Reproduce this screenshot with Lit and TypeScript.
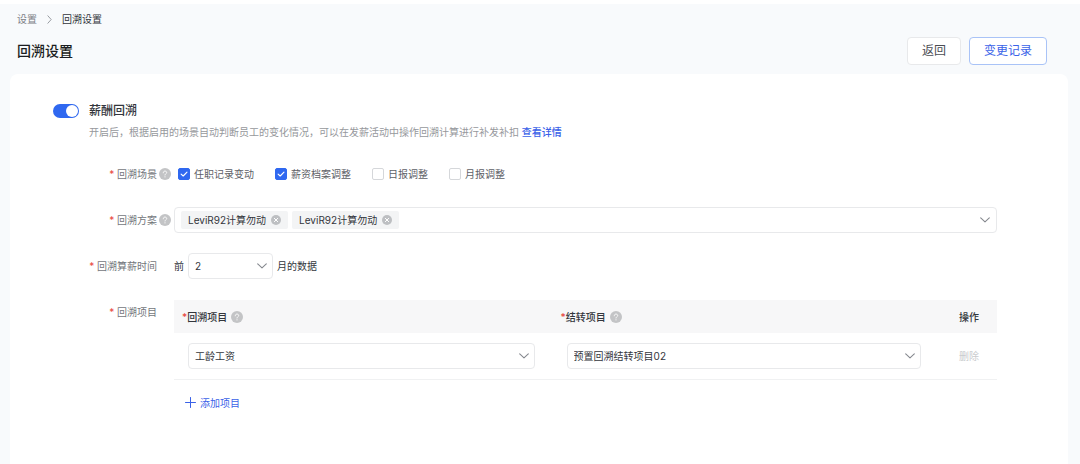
import { LitElement, html, svg, css } from "lit";
import { customElement, property, state } from "lit/decorators.js";

const chevron = html`<svg class="chevron" viewBox="0 0 10 6" aria-hidden="true">
  <path d="M0.7 0.9 L5 4.9 L9.3 0.9" fill="none" stroke="currentColor" stroke-width="1.1" stroke-linecap="round" stroke-linejoin="round" />
</svg>`;

const helpMark = svg`
  <circle cx="6" cy="6" r="6" fill="#c3c4c6" />
  <path d="M4.3 4.8 C4.3 3.7 5 3.1 6 3.1 C7 3.1 7.7 3.7 7.7 4.6 C7.7 5.6 6 5.8 6 7" fill="none" stroke="#fff" stroke-width="0.9" stroke-linecap="round" />
  <circle cx="6" cy="8.8" r="0.6" fill="#fff" />`;

@customElement("help-icon")
export class HelpIcon extends LitElement {
  static styles = css`
    :host {
      display: inline-flex;
      flex: none;
    }
    .icon {
      display: block;
      width: 12px;
      height: 12px;
    }
  `;
  render() {
    return html`<svg class="icon" viewBox="0 0 12 12" aria-hidden="true">${helpMark}</svg>`;
  }
}

@customElement("select-box")
export class SelectBox extends LitElement {
  static styles = css`
    :host {
      display: block;
    }
    .wrap {
      display: grid;
      grid-template-columns: 1fr 16px;
      align-items: center;
    }
    .field {
      grid-area: 1 / 1 / 2 / 3;
      width: 100%;
      height: 26px;
      box-sizing: border-box;
      padding: 0 24px 0 6px;
      border: 1px solid #e8e9eb;
      border-radius: 4px;
      background: #fff;
      appearance: none;
      font: inherit;
      color: #33363c;
    }
    .chevron {
      grid-area: 1 / 2 / 2 / 3;
      width: 10px;
      height: 6px;
      color: #85888e;
      pointer-events: none;
    }
  `;
  @property() label = "";
  @property({ attribute: false }) options: string[] = [];

  render() {
    return html`<div class="wrap">
      <select class="field" aria-label=${this.label}>
        ${this.options.map((o) => html`<option>${o}</option>`)}
      </select>
      ${chevron}
    </div>`;
  }
}

@customElement("app-root")
export class AppRoot extends LitElement {
  static styles = css`
    :host {
      display: flex;
      flex-direction: column;
      min-height: 100vh;
      box-sizing: border-box;
      border-top: 4px solid #fff;
      background: #f8fafc;
      font: 10px/16px Inter, "Noto Sans CJK SC", sans-serif;
      color: #33363c;
    }
    button {
      font: inherit;
      cursor: pointer;
    }
    a {
      color: #3a62e8;
      text-decoration: none;
    }
    .crumbs {
      display: flex;
      align-items: center;
      gap: 10px;
      padding: 7px 17px 0;
    }
    .crumb-link {
      color: #7d8086;
    }
    .crumb-sep {
      width: 5px;
      height: 9px;
      color: #9a9da3;
    }
    .head {
      display: flex;
      align-items: center;
      justify-content: space-between;
      padding: 10px 33px 9px 17px;
    }
    .title {
      margin: 0;
      font-size: 14px;
      line-height: 20px;
      font-weight: 500;
      color: #1b1d21;
    }
    .actions {
      display: flex;
      gap: 8px;
    }
    .btn {
      height: 28px;
      padding: 0 14px;
      border: 1px solid #e8e9eb;
      border-radius: 4px;
      background: #fff;
      font-size: 12px;
      line-height: 16px;
      color: #4a4d53;
    }
    .btn-primary {
      border-color: #a9c3f7;
      color: #3a62e8;
    }
    .card {
      flex: 1;
      box-sizing: border-box;
      margin: 0 12px 0 10px;
      padding: 29px 71px 40px 43px;
      border-radius: 8px 8px 0 0;
      background: #fff;
    }
    .intro {
      display: grid;
      grid-template-columns: 26px 1fr;
      column-gap: 10px;
      row-gap: 5px;
      align-items: center;
      margin-bottom: 21px;
    }
    .switch {
      appearance: none;
      display: flex;
      width: 26px;
      height: 14px;
      margin: 0;
      padding: 1px;
      box-sizing: border-box;
      justify-content: flex-end;
      border-radius: 7px;
      background: #2f68f0;
      cursor: pointer;
    }
    .switch::before {
      content: "";
      width: 12px;
      height: 12px;
      border-radius: 50%;
      background: #fff;
    }
    .switch:not(:checked) {
      justify-content: flex-start;
      background: #c3c4c6;
    }
    .section-title {
      font-size: 12px;
      font-weight: 500;
    }
    .desc {
      grid-column: 2;
      margin: 0;
      color: #96989c;
    }
    .desc-link {
      font-weight: 500;
    }
    .row {
      display: grid;
      grid-template-columns: 104px 14px 1fr;
      align-items: center;
      min-height: 26px;
      margin-bottom: 20px;
    }
    .row-top {
      align-items: start;
      margin: 21px 0 0;
    }
    .label {
      text-align: right;
      color: #74777c;
    }
    .row-top .label {
      padding-top: 4px;
    }
    .req {
      color: #e8453c;
    }
    .help {
      justify-self: end;
    }
    .control {
      grid-column: 3;
      min-width: 0;
      margin-left: 3px;
    }
    .checks {
      display: flex;
      flex-wrap: wrap;
      gap: 8px 21px;
      padding-left: 4px;
    }
    .check {
      display: flex;
      align-items: center;
      gap: 4px;
      color: #5d6066;
      cursor: pointer;
    }
    .box-wrap {
      display: grid;
    }
    .box {
      grid-area: 1 / 1;
      appearance: none;
      width: 12px;
      height: 12px;
      margin: 0;
      box-sizing: border-box;
      border: 1px solid #d5d7da;
      border-radius: 2px;
      background: #fff;
    }
    .box:checked {
      border-color: #2f68f0;
      background: #2f68f0;
    }
    .tick {
      grid-area: 1 / 1;
      width: 12px;
      height: 12px;
      pointer-events: none;
    }
    .tags {
      display: flex;
      align-items: center;
      gap: 4px;
      height: 26px;
      box-sizing: border-box;
      padding: 0 6px;
      border: 1px solid #e8e9eb;
      border-radius: 4px;
    }
    .tag {
      display: flex;
      flex: none;
      align-items: center;
      gap: 5px;
      height: 18px;
      padding: 0 7px;
      border-radius: 2px;
      background: #f3f4f5;
    }
    .tag-close {
      display: flex;
      padding: 0;
      border: 0;
      background: none;
    }
    .tag-close-icon {
      width: 10px;
      height: 10px;
    }
    .tag-input {
      flex: 1;
      min-width: 0;
      border: 0;
      padding: 0;
      background: none;
      outline: none;
      font: inherit;
    }
    .tags .chevron {
      flex: none;
      width: 10px;
      height: 6px;
      color: #85888e;
    }
    .inline {
      display: flex;
      align-items: center;
      gap: 4px;
    }
    .months {
      width: 85px;
    }
    .table {
      width: 100%;
      table-layout: fixed;
      border-collapse: collapse;
      text-align: left;
    }
    .th {
      box-sizing: border-box;
      height: 33px;
      padding: 0 8px;
      background: #f7f7f8;
      font-weight: 500;
    }
    .td {
      height: 46px;
      box-sizing: border-box;
      padding: 0 18px 0 14px;
      border-bottom: 1px solid #f0f1f2;
    }
    .th-in {
      display: flex;
      align-items: center;
    }
    .th-help {
      margin-left: 4px;
    }
    .col-item {
      width: 46%;
    }
    .col-op {
      width: 58px;
    }
    .cell-op {
      padding: 0 0 0 20px;
    }
    .delete {
      padding: 0;
      border: 0;
      background: none;
      color: #c9cbce;
    }
    .add {
      display: flex;
      align-items: center;
      gap: 4px;
      margin: 15px 0 0 11px;
      padding: 0;
      border: 0;
      background: none;
      color: #3a62e8;
    }
    .plus {
      width: 11px;
      height: 11px;
      color: #3a62e8;
    }
  `;

  @state() private scenes = [
    { name: "任职记录变动", on: true },
    { name: "薪资档案调整", on: true },
    { name: "日报调整", on: false },
    { name: "月报调整", on: false },
  ];
  @state() private plans = ["LeviR92计算勿动", "LeviR92计算勿动"];

  private toggleScene(index: number) {
    this.scenes = this.scenes.map((s, i) => (i === index ? { ...s, on: !s.on } : s));
  }

  private removePlan(index: number) {
    this.plans = this.plans.filter((_, i) => i !== index);
  }

  private renderScene(scene: { name: string; on: boolean }, index: number) {
    return html`<label class="check">
      <span class="box-wrap">
        <input class="box" type="checkbox" .checked=${scene.on} @change=${() => this.toggleScene(index)} />
        ${scene.on
          ? html`<svg class="tick" viewBox="0 0 12 12" aria-hidden="true">
              <path d="M3.1 6.1 L5.2 8 L9 4.1" fill="none" stroke="#fff" stroke-width="1.1" stroke-linecap="round" stroke-linejoin="round" />
            </svg>`
          : null}
      </span>
      ${scene.name}
    </label>`;
  }

  private renderPlan(name: string, index: number) {
    return html`<span class="tag">
      ${name}
      <button class="tag-close" type="button" aria-label="移除" @click=${() => this.removePlan(index)}>
        <svg class="tag-close-icon" viewBox="0 0 10 10" aria-hidden="true">
          <circle cx="5" cy="5" r="5" fill="#bdbfc2" />
          <path d="M3.3 3.3 L6.7 6.7 M6.7 3.3 L3.3 6.7" stroke="#fff" stroke-width="1" stroke-linecap="round" />
        </svg>
      </button>
    </span>`;
  }

  render() {
    const star = html`<span class="req">*</span>`;
    return html`
      <nav class="crumbs">
        <a class="crumb-link" href="#">设置</a>
        <svg class="crumb-sep" viewBox="0 0 5 9" aria-hidden="true">
          <path d="M0.6 0.5 L4.2 4.5 L0.6 8.5" fill="none" stroke="currentColor" stroke-width="1" />
        </svg>
        <span>回溯设置</span>
      </nav>
      <header class="head">
        <h1 class="title">回溯设置</h1>
        <div class="actions">
          <button class="btn" type="button">返回</button>
          <button class="btn btn-primary" type="button">变更记录</button>
        </div>
      </header>
      <main class="card">
        <div class="intro">
          <input class="switch" id="enable" type="checkbox" role="switch" checked />
          <label class="section-title" for="enable">薪酬回溯</label>
          <p class="desc">
            开启后，根据启用的场景自动判断员工的变化情况，可以在发薪活动中操作回溯计算进行补发补扣
            <a class="desc-link" href="#">查看详情</a>
          </p>
        </div>

        <div class="row" role="group" aria-labelledby="scene-label">
          <span class="label" id="scene-label">${star} 回溯场景</span>
          <help-icon class="help"></help-icon>
          <div class="control checks">${this.scenes.map((s, i) => this.renderScene(s, i))}</div>
        </div>

        <div class="row">
          <label class="label" for="plan">${star} 回溯方案</label>
          <help-icon class="help"></help-icon>
          <div class="control tags">
            ${this.plans.map((p, i) => this.renderPlan(p, i))}
            <input class="tag-input" id="plan" type="text" role="combobox" aria-expanded="false" />
            ${chevron}
          </div>
        </div>

        <div class="row">
          <span class="label">${star} 回溯算薪时间</span>
          <div class="control inline">
            <span>前</span>
            <select-box class="months" label="回溯算薪时间" .options=${["2"]}></select-box>
            <span>月的数据</span>
          </div>
        </div>

        <div class="row row-top">
          <span class="label">${star} 回溯项目</span>
          <div class="control">
            <table class="table">
              <thead>
                <tr>
                  <th class="th col-item">
                    <div class="th-in">${star}回溯项目<help-icon class="th-help"></help-icon></div>
                  </th>
                  <th class="th">
                    <div class="th-in">${star}结转项目<help-icon class="th-help"></help-icon></div>
                  </th>
                  <th class="th cell-op col-op">操作</th>
                </tr>
              </thead>
              <tbody>
                <tr>
                  <td class="td"><select-box label="回溯项目" .options=${["工龄工资"]}></select-box></td>
                  <td class="td"><select-box label="结转项目" .options=${["预置回溯结转项目02"]}></select-box></td>
                  <td class="td cell-op"><button class="delete" type="button" disabled>删除</button></td>
                </tr>
              </tbody>
            </table>
            <button class="add" type="button">
              <svg class="plus" viewBox="0 0 11 11" aria-hidden="true">
                <path d="M5.5 0.5 V10.5 M0.5 5.5 H10.5" fill="none" stroke="currentColor" stroke-width="1" stroke-linecap="round" />
              </svg>
              添加项目
            </button>
          </div>
        </div>
      </main>
    `;
  }
}
